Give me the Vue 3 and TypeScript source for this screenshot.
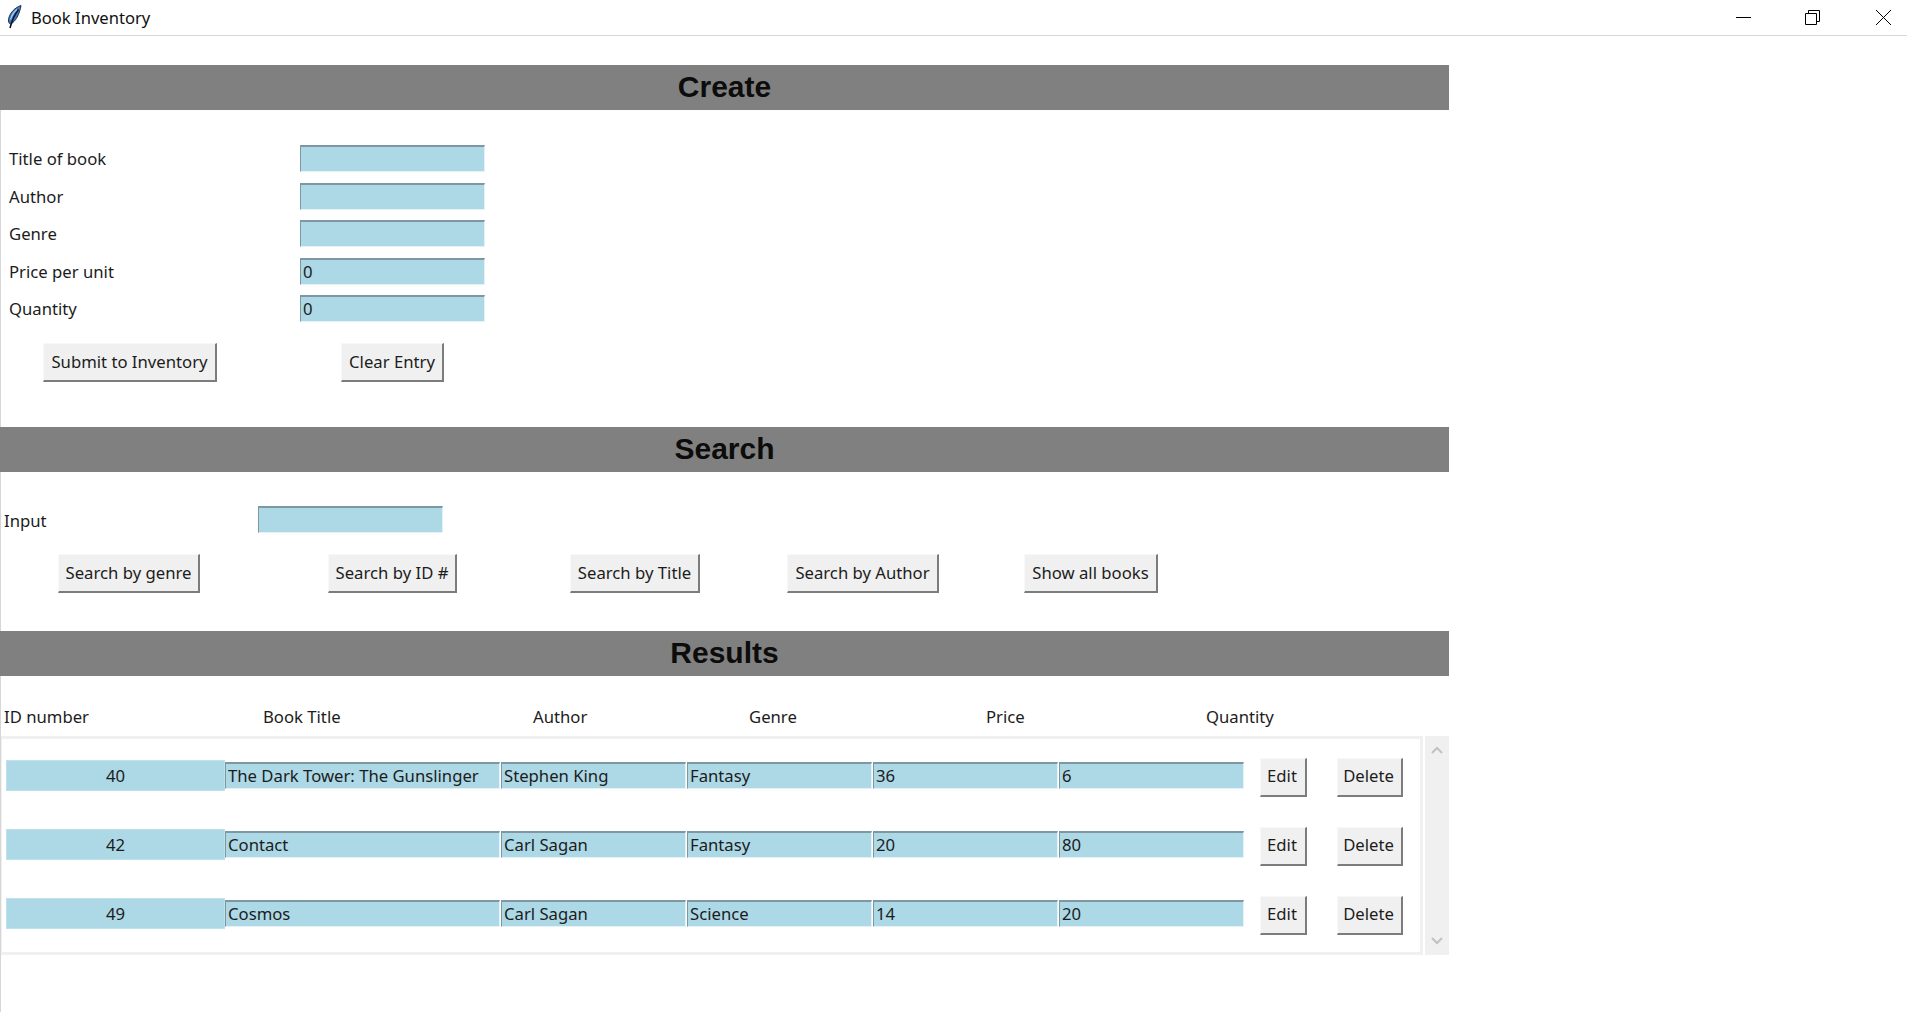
<template>
  <div class="window">
    <div class="titlebar">
      <svg class="app-icon" width="16" height="26" viewBox="0 0 16 26">
        <path d="M14 .5C8 2.500 2.500 8 1.500 14.500c-.3 2.200.4 3.800 2 4.800C8.500 16.500 12.500 9.500 14 .5z" fill="#3f7cc9" stroke="#1d2f4a" stroke-width="1" />
        <path d="M11.500 4.500C8 9 5 15 3 23" fill="none" stroke="#0d1520" stroke-width="1.600" />
        <path d="M10 4.500C7 7 4.500 11 3.500 14.500" fill="none" stroke="#a9cdf0" stroke-width="1.200" />
      </svg>
      <span class="app-title">Book Inventory</span>
      <div class="win-controls">
        <svg class="ctl ctl-min" width="15" height="15" viewBox="0 0 15 15"><path d="M0 7.500H15" stroke="#000" fill="none" /></svg>
        <svg class="ctl ctl-max" width="15" height="15" viewBox="0 0 15 15"><path d="M.5 3.500H11.500V14.500H.5zM3.500 3.500V.5H14.500V11.500H11.500" stroke="#000" fill="none" /></svg>
        <svg class="ctl ctl-close" width="15" height="15" viewBox="0 0 15 15"><path d="M0 0L15 15M15 0L0 15" stroke="#000" fill="none" /></svg>
      </div>
    </div>

    <main class="content">
      <h2 class="bar bar-create">Create</h2>
      <div class="fields">
        <template v-for="field in createFields" :key="field.label">
          <label class="field-label">{{ field.label }}</label>
          <input class="entry" :value="field.value" readonly />
        </template>
      </div>
      <div class="create-actions">
        <button class="btn">Submit to Inventory</button>
        <span></span>
        <button class="btn">Clear Entry</button>
      </div>

      <h2 class="bar bar-search">Search</h2>
      <div class="search-grid">
        <label class="search-label">Input</label>
        <input class="entry" readonly />
      </div>
      <div class="search-actions">
        <button v-for="label in searchButtons" :key="label" class="btn">{{ label }}</button>
      </div>

      <h2 class="bar bar-results">Results</h2>
      <div class="result-head">
        <span v-for="col in columns" :key="col">{{ col }}</span>
      </div>
      <div class="result-area">
        <div class="result-frame">
          <div v-for="book in books" :key="book.id" class="result-row">
            <div class="id-cell">{{ book.id }}</div>
            <input class="entry title-entry" :value="book.title" readonly />
            <input class="entry cell-entry" :value="book.author" readonly />
            <input class="entry cell-entry" :value="book.genre" readonly />
            <input class="entry cell-entry" :value="book.price" readonly />
            <input class="entry cell-entry" :value="book.quantity" readonly />
            <button class="btn btn-edit">Edit</button>
            <button class="btn btn-delete">Delete</button>
          </div>
        </div>
        <div class="scrollbar">
          <svg width="14" height="9" viewBox="0 0 14 9"><path d="M2 7L7 2L12 7" fill="none" stroke="#c2c2c2" stroke-width="2" /></svg>
          <svg width="14" height="9" viewBox="0 0 14 9"><path d="M2 2L7 7L12 2" fill="none" stroke="#c2c2c2" stroke-width="2" /></svg>
        </div>
      </div>
    </main>
  </div>
</template>

<script setup lang="ts">
interface Book {
  id: number
  title: string
  author: string
  genre: string
  price: number
  quantity: number
}

const createFields = [
  { label: 'Title of book', value: '' },
  { label: 'Author', value: '' },
  { label: 'Genre', value: '' },
  { label: 'Price per unit', value: '0' },
  { label: 'Quantity', value: '0' }
]

const searchButtons = ['Search by genre', 'Search by ID #', 'Search by Title', 'Search by Author', 'Show all books']
const columns = ['ID number', 'Book Title', 'Author', 'Genre', 'Price', 'Quantity']

const books: Book[] = [
  { id: 40, title: 'The Dark Tower: The Gunslinger', author: 'Stephen King', genre: 'Fantasy', price: 36, quantity: 6 },
  { id: 42, title: 'Contact', author: 'Carl Sagan', genre: 'Fantasy', price: 20, quantity: 80 },
  { id: 49, title: 'Cosmos', author: 'Carl Sagan', genre: 'Science', price: 14, quantity: 20 }
]
</script>

<style>
html,
body {
  margin: 0;
  background: #fff;
}
</style>

<style scoped>
.window {
  height: 1012px;
  overflow: hidden;
  font-family: "Noto Sans", sans-serif;
  font-size: 16.7px;
  color: #1c1c1c;
  background: #fff;
}

.titlebar {
  display: flex;
  align-items: center;
  height: 35px;
  border-bottom: 1px solid #d6d6d6;
  padding-left: 7px;
}

.app-icon {
  margin-right: 8px;
}

.app-title {
  font-size: 16.600px;
  color: #111;
}

.win-controls {
  margin-left: auto;
  display: flex;
  padding-right: 16px;
}

.ctl-max {
  margin-left: 54px;
}

.ctl-close {
  margin-left: 56px;
}

.content {
  width: 1448px;
  height: 976px;
  border-left: 1px solid #d6d6d6;
}

.bar {
  margin: 0 0 0 -1px;
  height: 45px;
  background: #808080;
  color: #0c0c0c;
  text-align: center;
  font-family: "Liberation Sans", Arial, sans-serif;
  font-size: 30px;
  font-weight: 700;
  line-height: 44px;
}

.bar-create {
  margin-top: 29px;
}

.bar-search {
  margin-top: 45px;
}

.bar-results {
  margin-top: 38px;
}

.fields {
  display: grid;
  grid-template-columns: 299px 185px;
  grid-auto-rows: 27px;
  row-gap: 10.5px;
  align-items: center;
  margin-top: 35px;
}

.field-label {
  padding-left: 8px;
}

.entry {
  box-sizing: border-box;
  width: 185px;
  height: 27px;
  margin: 0;
  padding: 0 0 1px 2px;
  border-style: solid;
  border-width: 2px 1px 1px 1px;
  border-color: #7d98a2 #e3f2f7 #e3f2f7 #7d98a2;
  border-radius: 0;
  outline: none;
  background: #add8e6;
  font: inherit;
  color: #1c1c1c;
}

.create-actions {
  display: grid;
  grid-template-columns: 258px 41px 185px;
  justify-items: center;
  margin-top: 21px;
}

.btn {
  box-sizing: border-box;
  height: 39px;
  margin: 0;
  padding: 0 7px 1px;
  border-style: solid;
  border-width: 1px 2px 2px 1px;
  border-color: #f8f8f8 #7c7c7c #7c7c7c #f8f8f8;
  border-radius: 0;
  background: #f0f0f0;
  font: inherit;
  color: #1c1c1c;
  white-space: nowrap;
}

.search-grid {
  display: grid;
  grid-template-columns: 257px 185px;
  align-items: center;
  margin-top: 34px;
}

.search-label {
  padding: 2px 0 0 3px;
}

.search-actions {
  display: grid;
  grid-template-columns: 256px 271px 214px 242px 214px;
  justify-items: center;
  margin-top: 21px;
}

.result-head {
  display: grid;
  grid-template-columns: 259px 270px 216px 237px 220px auto;
  height: 20px;
  line-height: 20px;
  padding-left: 3px;
  margin-top: 31px;
}

.result-area {
  display: flex;
  margin-top: 9px;
  height: 219px;
}

.result-frame {
  box-sizing: border-box;
  width: 1422px;
  border-style: solid;
  border-color: #f0f0f0;
  border-width: 3px 3px 3px 1px;
  padding: 19px 0 0 4px;
  display: flex;
  flex-direction: column;
  gap: 30px;
}

.result-row {
  display: flex;
  align-items: flex-start;
  height: 39px;
}

.id-cell {
  box-sizing: border-box;
  width: 219px;
  height: 31px;
  margin-top: 2px;
  background: #add8e6;
  border: 1px solid #bfe1ec;
  text-align: center;
  line-height: 30px;
}

.title-entry {
  width: 275px;
  margin-top: 4px;
}

.cell-entry {
  margin: 4px 0 0 1px;
}

.btn-edit {
  width: 47px;
  margin-left: 16px;
  padding: 0 2px 3px 0;
}

.btn-delete {
  width: 66px;
  margin-left: 30px;
  padding: 0 2px 3px 0;
}

.scrollbar {
  box-sizing: border-box;
  width: 24px;
  margin-left: 2px;
  background: #f0f0f0;
  display: flex;
  flex-direction: column;
  align-items: center;
  justify-content: space-between;
  padding: 10px 0;
}
</style>
